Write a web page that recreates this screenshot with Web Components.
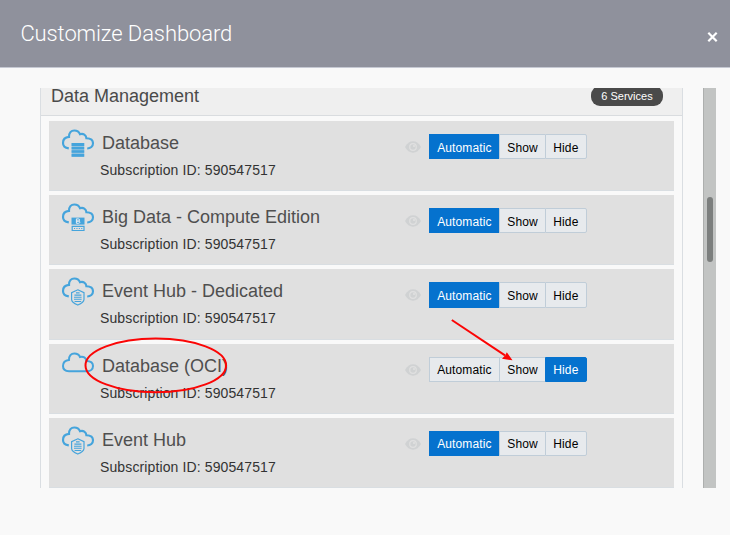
<!DOCTYPE html>
<html lang="en">
<head>
<meta charset="utf-8">
<title>Customize Dashboard</title>
<style>
html, body { margin: 0; height: 100%; background: #f9f9f9; overflow: hidden; }
</style>
</head>
<body>
<dashboard-dialog></dashboard-dialog>
<script>
const define = (name, html, attrs = [], update) => {
  const t = document.createElement('template');
  t.innerHTML = html;
  customElements.define(name, class extends HTMLElement {
    static get observedAttributes() { return attrs; }
    constructor() {
      super();
      this.attachShadow({ mode: 'open' }).append(t.content.cloneNode(true));
    }
    attributeChangedCallback(attr, old, value) { update(this.shadowRoot, attr, value); }
  });
};

const OPEN_CLOUD = '<path d="M6.8 19.4C3 18.8 1 16.7 1 13.9C1 10.5 3.4 8.2 7 7.9C6.8 3.8 9.2 1.5 12.3 1.5C15 1.5 17.1 2.9 18 5.2C21.2 4.1 24.3 6 24.4 9.3C28.5 9.4 31 11.4 31 14.3C31 17.4 28.6 19.5 25.2 19.5" fill="none" stroke="#45a4dc" stroke-width="2.15"/>';
const GLYPHS = {
  database: OPEN_CLOUD + '<g fill="#45a4dc"><rect x="9.6" y="14" width="12.6" height="13.8" opacity=".5"/><path d="M9.6 14h12.6v3H9.6zM9.6 18h12.6v2.2H9.6zM9.6 21.2h12.6v2.6H9.6zM9.6 25h12.6v2.7H9.6z"/></g>',
  bigdata: OPEN_CLOUD + '<path d="M9.5 14.6h13v7H9.5z" fill="#45a4dc"/><path d="M14.4 15.9v4.4h2q1.5 0 1.5-1.1t-1.4-1.1h-2.1h1.9q1.3 0 1.3-1.1t-1.3-1.1z" fill="none" stroke="#e8eef2" stroke-width="1"/><path d="M10.2 23.3h11.8v4.2H10.2z" fill="none" stroke="#45a4dc" stroke-width="1.2"/><path d="M12 25.5h8.4" stroke="#45a4dc" stroke-width="1.1" stroke-dasharray="1.1 1.3"/>',
  eventhub: OPEN_CLOUD + '<path d="M15.8 12.8L22 15.7V22.5Q21.9 25.6 15.8 28Q9.6 25.6 9.6 22.5V15.7z" fill="none" stroke="#45a4dc" stroke-width="1.2"/><path d="M14 15.9h3.6M12.4 18.1h7M12 20.2h7.6M12 22.3h7.6M12.6 24.5h6.6" stroke="#45a4dc" stroke-width="1.1"/>',
  cloud: '<path d="M7 19.5C3 19.3 1 17.3 1 14.2C1 10.6 3.4 8.4 7 8.1C6.8 4 9.2 1.7 12.3 1.7C15 1.7 17.1 3 18 5.2C21.2 4.1 24.3 6 24.4 9.2C28.5 9.3 31 11.3 31 14.3C31 17.4 28.6 19.5 25.2 19.5z" transform="translate(0 -.2)" fill="none" stroke="#45a4dc" stroke-width="2"/>'
};

define('service-icon', `
<style>:host{display:block;width:32px;height:29px}svg{display:block;overflow:visible}</style>
<svg width="32" height="29" viewBox="0 0 32 29"></svg>`,
['kind'], (root, attr, value) => { root.querySelector('svg').innerHTML = GLYPHS[value]; });

define('eye-icon', `
<style>:host{display:block;width:16px;height:12px}svg{display:block}</style>
<svg width="16" height="12" viewBox="0 0 16 12"><path d="M0 6Q3 .3 8 .3T16 6Q13 11.7 8 11.7T0 6z" fill="#d0d2d3"/><circle cx="8" cy="6" r="3.9" fill="#e0e0e0"/><circle cx="8" cy="6" r="2.7" fill="#d0d2d3"/><circle cx="9" cy="5" r="1.1" fill="#e0e0e0"/></svg>`);

define('mode-switch', `
<style>
:host{display:grid;grid-template-columns:70.4px 46px 41.6px;height:25.2px;width:158px;font:12px "Liberation Sans",Arial,sans-serif;letter-spacing:.12px;color:#000}
button{all:unset;box-sizing:border-box;height:25.2px;padding-top:.65px;text-align:center;line-height:25px;background:#e7eaed;border:1px solid #c0cdd8;border-right-width:0;white-space:nowrap}
button:first-child{border-radius:2px 0 0 2px}
button:last-child{border-radius:0 2px 2px 0;border-right-width:1px}
button[aria-pressed=true]{background:#0572ce;border-color:#0572ce;color:#fff}
</style>
<button>Automatic</button><button>Show</button><button>Hide</button>`,
['value'], (root, attr, value) => root.querySelectorAll('button').forEach(b =>
  b.setAttribute('aria-pressed', b.textContent === value)));

define('service-card', `
<style>
:host{display:grid;grid-template-columns:32px 311px 24px 1fr;box-sizing:border-box;height:70.2px;padding:8px 13px 0;background:#e0e0e0;border-bottom:1px solid #d9dee2;font-family:"Liberation Sans",Arial,sans-serif}
.text{padding-top:3px}
h3{margin:0 0 0 8px;font-size:18px;font-weight:400;line-height:22px;color:#4f4f4f}
p{margin:5px 0 0 6px;font-size:14px;line-height:22px;letter-spacing:.12px;color:#333}
eye-icon{margin-top:12px}
mode-switch{margin:5px 0 0 -.3px}
</style>
<service-icon></service-icon>
<div class="text"><h3><slot></slot></h3><p>Subscription ID: 590547517</p></div>
<eye-icon></eye-icon><mode-switch></mode-switch>`,
['kind', 'value'], (root, attr, value) =>
  root.querySelector(attr === 'kind' ? 'service-icon' : 'mode-switch').setAttribute(attr, value));

define('service-group', `
<style>
:host{display:block;box-sizing:border-box;width:643px;height:400px;overflow:hidden;border:solid #dadee2;border-width:0 1px;font-family:"Liberation Sans",Arial,sans-serif}
header{display:flex;justify-content:space-between;box-sizing:border-box;height:28px;background:#efefef;border-bottom:1px solid #d9dcdf;padding:0 19px 0 10px}
h2{margin:0;font-size:18px;line-height:16px;font-weight:400;color:#4a4a4a}
.count{box-sizing:border-box;width:72px;height:20px;margin-top:-2px;border-radius:9px;background:#4a4a4a;color:#fff;font-size:11px;line-height:21px;text-align:center}
.list{display:flex;flex-direction:column;gap:4px;padding:5px 8px 0}
</style>
<header><h2>Data Management</h2><span class="count">6 Services</span></header>
<div class="list"><slot></slot></div>`);

define('scroll-track', `
<style>
:host{display:block;box-sizing:border-box;width:13px;height:400px;background:#c2c4c3;border-left:1px solid #adafae;padding:109px 0 0 3px}
i{display:block;width:6px;height:65px;border-radius:3px;background:#7c7f7e}
</style><i></i>`);

define('dialog-header', `
<style>
:host{display:flex;justify-content:space-between;box-sizing:border-box;height:68px;background:#8f919c;border-bottom:1px solid #c6c9d3;padding:0 12.5px 0 20.4px;color:#fff}
h1{margin:0;font:300 22px/67px Roboto,sans-serif;letter-spacing:-.1px}
svg{margin-top:32px}
</style>
<h1><slot></slot></h1>
<svg width="11" height="10" viewBox="0 0 11 10" role="img" aria-label="Close"><path d="M1.3 .8L9.7 9.2M9.7 .8L1.3 9.2" stroke="#fff" stroke-width="2.2"/></svg>`);

define('annotation-layer', `
<style>:host{position:absolute;inset:0;pointer-events:none}svg{display:block}</style>
<svg width="730" height="535"><ellipse cx="155.8" cy="365.4" rx="70.3" ry="26.9" fill="none" stroke="#fb0505" stroke-width="2"/><path d="M451.8 320L505 355.3" stroke="#fb0505" stroke-width="2"/><path d="M512.5 360.3L506.8 352.2L505.3 355.2L502 358.8z" fill="#fb0505"/></svg>`);

define('dashboard-dialog', `
<style>
:host{display:block;position:relative;width:730px;height:535px;overflow:hidden;background:#f9f9f9}
main{display:flex;gap:20px;padding:20px 0 0 40px}
</style>
<dialog-header>Customize Dashboard</dialog-header>
<main><service-group>
<service-card kind="database" value="Automatic">Database</service-card>
<service-card kind="bigdata" value="Automatic">Big Data - Compute Edition</service-card>
<service-card kind="eventhub" value="Automatic">Event Hub - Dedicated</service-card>
<service-card kind="cloud" value="Hide">Database (OCI)</service-card>
<service-card kind="eventhub" value="Automatic">Event Hub</service-card>
</service-group><scroll-track></scroll-track></main>
<annotation-layer></annotation-layer>`);
</script>
</body>
</html>
